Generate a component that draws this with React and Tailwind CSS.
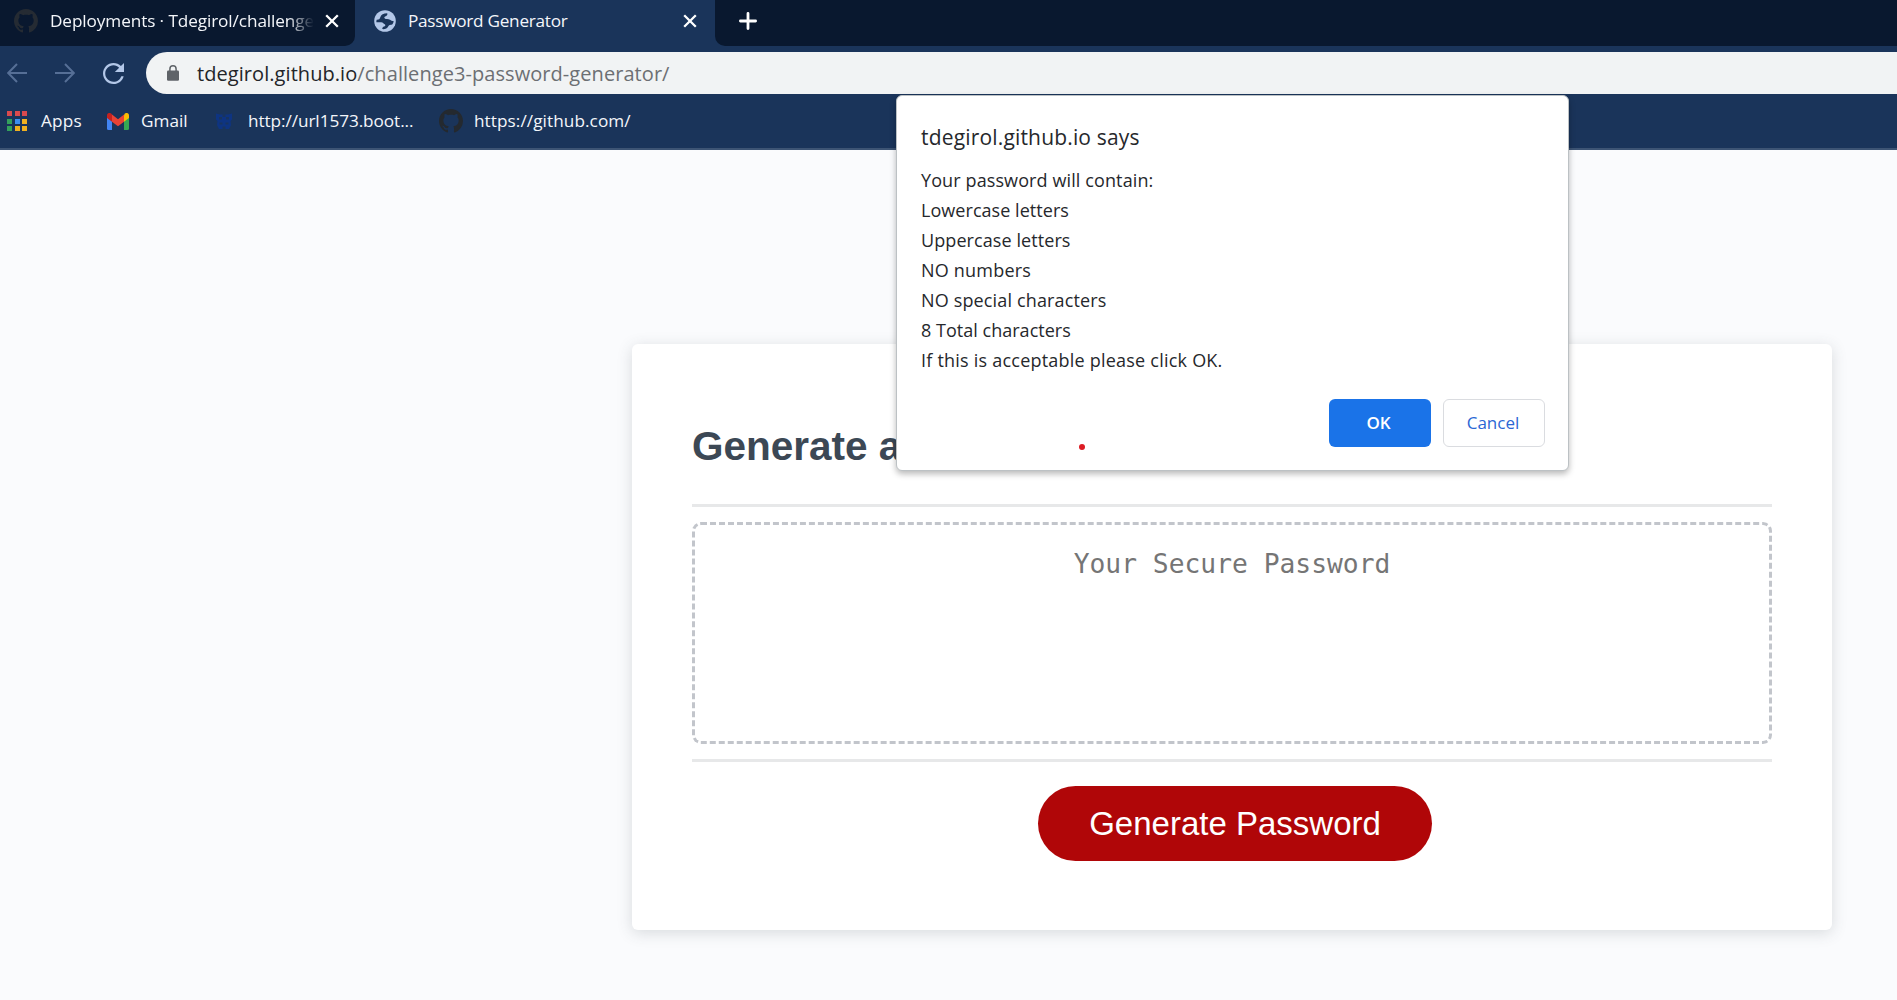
import React from "react";

const OCTOCAT =
  "M8 0C3.58 0 0 3.58 0 8c0 3.54 2.29 6.53 5.47 7.59.4.07.55-.17.55-.38 0-.19-.01-.82-.01-1.49-2.01.37-2.53-.49-2.69-.94-.09-.23-.48-.94-.82-1.13-.28-.15-.68-.52-.01-.53.63-.01 1.08.58 1.23.82.72 1.21 1.87.87 2.33.66.07-.52.28-.87.51-1.07-1.78-.2-3.64-.89-3.64-3.95 0-.87.31-1.59.82-2.15-.08-.2-.36-1.02.08-2.12 0 0 .67-.21 2.2.82.64-.18 1.32-.27 2-.27s1.36.09 2 .27c1.53-1.04 2.2-.82 2.2-.82.44 1.1.16 1.92.08 2.12.51.56.82 1.27.82 2.15 0 3.07-1.87 3.75-3.65 3.95.29.25.54.73.54 1.48 0 1.07-.01 1.93-.01 2.2 0 .21.15.46.55.38A8.01 8.01 0 0 0 16 8c0-4.42-3.58-8-8-8z";

const APP_COLORS = [
  "bg-[#d94a4e]", "bg-[#d94a4e]", "bg-[#d94a4e]",
  "bg-[#34a05c]", "bg-[#3c8ef0]", "bg-[#f0b020]",
  "bg-[#34a05c]", "bg-[#f0b020]", "bg-[#f0b020]",
];

const MESSAGE = [
  { text: "Your password will contain:", cls: "tracking-[0.11px]" },
  { text: "Lowercase letters", cls: "tracking-[0.05px]" },
  { text: "Uppercase letters", cls: "tracking-[0.08px]" },
  { text: "NO numbers", cls: "tracking-[0.2px]" },
  { text: "NO special characters", cls: "tracking-[0.15px]" },
  { text: "8 Total characters", cls: "tracking-[0.02px]" },
  { text: "If this is acceptable please click OK.", cls: "tracking-[0.22px]" },
];

function GitHubMark({ className }) {
  return (
    <svg viewBox="0 0 16 16" className={className} fill="currentColor">
      <path d={OCTOCAT} />
    </svg>
  );
}

function CloseIcon({ className = "" }) {
  return (
    <svg viewBox="0 0 14 14" className={`size-[14px] shrink-0 ${className}`} stroke="#fff" strokeWidth="2.3" fill="none">
      <path d="M1.2 1.2L12.8 12.8M12.8 1.2L1.2 12.8" />
    </svg>
  );
}

function TabStrip() {
  return (
    <div className="flex h-[46px] bg-[#1a345a] text-[17.2px] text-[#f4f6fa]">
      <div className="flex w-[355px] items-center rounded-br-[10px] bg-[#09182f] pb-[5px] pl-[14px]">
        <GitHubMark className="size-6 shrink-0 text-[#252b33]" />
        <div className="ml-[12px] w-[264px] overflow-hidden whitespace-nowrap tracking-[-0.1px] [mask-image:linear-gradient(to_right,#000_90%,transparent_100%)]">
          Deployments · Tdegirol/challenge
        </div>
        <CloseIcon className="ml-[11px]" />
      </div>
      <div className="flex w-[360px] items-center pb-[5px] pl-[19px]">
        <svg viewBox="0 0 22 22" className="size-[22px] shrink-0">
          <circle cx="11" cy="11" r="10.8" fill="#b3c7e8" />
          <path
            d="M6.300 7.200C7 4.700 9.500 3.500 13.200 3.300C13.800 4.700 13 5.700 11.600 6.200C10.400 6.700 10 7.300 10.600 8.200C11.500 9.500 14.500 8.600 16 9.700C17 10.500 18 11 19.600 11C19.500 13 18.600 14.800 17.200 14.700C15.600 14.600 14.600 15.400 14 16.700C13.200 18.500 11.300 19.300 8.300 19.100C8.100 17.500 8.800 16.800 10.200 16.400C11.600 16 11.700 15 10.700 14.300C9.300 13.400 9 12.300 7.200 12.200H2.400C2.300 11.200 2.400 10.400 2.700 9.700C4.800 9.800 5.900 9 6.300 7.200Z"
            fill="#1a345a"
          />
        </svg>
        <span className="ml-[12px] tracking-[-0.27px]">Password Generator</span>
        <CloseIcon className="ml-auto mr-[18px]" />
      </div>
      <div className="flex flex-1 items-center rounded-bl-[10px] bg-[#09182f] pb-[5px] pl-[24px]">
        <svg viewBox="0 0 18 18" className="size-[18px]" stroke="#fff" strokeWidth="2.8" strokeLinecap="round">
          <path d="M9 1.400V16.600M1.400 9H16.600" />
        </svg>
      </div>
    </div>
  );
}

function Toolbar() {
  return (
    <div className="flex h-12 items-center bg-[#1a345a] pt-[6px]">
      <svg viewBox="0 0 20 20" className="ml-[7px] size-5" stroke="#566f96" strokeWidth="2" fill="none">
        <path d="M20 10H1.800M10 1L1.200 10L10 19" />
      </svg>
      <svg viewBox="0 0 20 20" className="ml-7 size-5" stroke="#566f96" strokeWidth="2" fill="none">
        <path d="M0 10H18.200M10 1L18.800 10L10 19" />
      </svg>
      <svg viewBox="4 4 16 16" className="ml-7 size-[21px]" fill="#b3c7e8">
        <path d="M17.650 6.350C16.200 4.900 14.210 4 12 4c-4.420 0-7.990 3.580-7.990 8s3.570 8 7.990 8c3.730 0 6.840-2.550 7.730-6h-1.780c-.82 2.330-3.040 4.300-5.950 4.300-3.480 0-6.300-2.820-6.300-6.300s2.820-6.300 6.300-6.300c1.740 0 3.200.75 4.300 1.900L13 10.800h7V4l-2.350 2.350z" />
      </svg>
      <div className="ml-[22px] flex h-[42px] flex-1 items-center rounded-l-full bg-[#f1f3f4] pl-[21px]">
        <svg viewBox="0 0 12 16" className="h-4 w-3 shrink-0">
          <rect x="0" y="5.500" width="12" height="10.300" rx="1.200" fill="#5f6368" />
          <path d="M2.900 6V3.900a3.100 3.100 0 0 1 6.200 0V6" stroke="#5f6368" strokeWidth="1.500" fill="none" />
        </svg>
        <span className="ml-[18px] whitespace-nowrap pt-[2px] text-[20px] tracking-[0.065px] text-[#6c6f73]">
          <span className="text-[#232529]">tdegirol.github.io</span>/challenge3-password-generator/
        </span>
      </div>
    </div>
  );
}

function Bookmarks() {
  return (
    <div className="flex h-14 items-center border-b-2 border-[#3d5474] bg-[#1a345a] text-[17.2px] text-[#f4f6fa]">
      <div className="ml-[7px] grid grid-cols-3 gap-[2.500px]">
        {APP_COLORS.map((c, i) => (
          <span key={i} className={`size-[5px] ${c}`} />
        ))}
      </div>
      <span className="ml-[14px] w-[41px] tracking-[0.2px]">Apps</span>
      <svg viewBox="0 0 22 17" className="ml-[25px] h-[17px] w-[22px] shrink-0">
        <path d="M0 2.500V15.500A1.500 1.500 0 0 0 1.500 17H5V7z" fill="#4285f4" />
        <path d="M22 2.500V15.500A1.500 1.500 0 0 1 20.500 17H17V7z" fill="#34a853" />
        <path d="M17 2.200V8.800L22 5V2.500C22 .2 19.500-.8 17.800.6z" fill="#fbbc04" />
        <path d="M5 8.800V1.600L11 6.200L17 1.600V8.800L11 13.300z" fill="#ea4335" />
        <path d="M0 2.500V5L5 8.800V1.400L4.200.6C2.500-.8 0 .2 0 2.500z" fill="#c5221f" />
      </svg>
      <span className="ml-[12px] w-[48px]">Gmail</span>
      <svg viewBox="0 0 16 18" className="ml-[27px] h-[18px] w-4 shrink-0" fill="#0e3482">
        <path d="M0 1.500L4 2.500H12L16 1.500V7.500L14.500 9L15 13L13 17H3L1 13L1.500 9L0 7.500z" />
        <path d="M3 5H6V7.500H3zM10 5H13V7.500H10zM6.500 0H9.500V5H6.500zM3.500 10.500H6.500V12.500H3.500zM9.500 10.500H12.500V12.500H9.500zM6.500 14.500H9.500V17H6.500z" fill="#18345f" />
      </svg>
      <span className="ml-[16px] w-[166px] tracking-[-0.07px]">http://url1573.boot...</span>
      <GitHubMark className="ml-[25px] size-6 shrink-0 text-[#24292f]" />
      <span className="ml-[11px] tracking-[0.07px]">https://github.com/</span>
    </div>
  );
}

function GeneratorCard() {
  return (
    <section className="ml-[632px] flex h-[586px] w-[1200px] flex-col rounded-md bg-white px-[60px] shadow-[0_3px_15px_rgba(60,70,80,0.18)]">
      <header className="flex h-[160px] items-center pt-[43px] font-['Liberation_Sans',sans-serif]">
        <h2 className="whitespace-nowrap text-[40.5px] font-bold leading-[46px] text-[#3c4855]">Generate a Password</h2>
      </header>
      <div className="h-[3px] bg-[#e7e8e9]" />
      <textarea
        readOnly
        placeholder="Your Secure Password"
        className="mt-[15px] block h-[222px] w-full resize-none rounded-[9px] border-[3px] border-dashed border-[#c2c5cb] pt-[22px] text-center font-['DejaVu_Sans_Mono',monospace] text-[26.3px] leading-[34px] placeholder:text-[#757575]"
      />
      <div className="mt-[15px] h-[3px] shrink-0 bg-[#e7e8e9]" />
      <button className="ml-[346px] mt-6 h-[75px] w-[394px] rounded-full bg-[#b00608] font-['Liberation_Sans',sans-serif] text-[33px] text-white">
        Generate Password
      </button>
    </section>
  );
}

function ConfirmDialog() {
  return (
    <div className="absolute left-[896px] top-[95px] h-[376px] w-[673px] rounded-md border border-[#bcc1c4] bg-white px-6 pt-[26px] text-[#26282c] shadow-[0_3px_6px_rgba(0,0,0,0.28)]">
      <h1 className="text-[21px] leading-[30px] tracking-[0.17px]">tdegirol.github.io says</h1>
      <div className="mt-[13px] text-[18px] leading-[30px]">
        {MESSAGE.map((m) => (
          <p key={m.text} className={m.cls}>{m.text}</p>
        ))}
      </div>
      <div className="mt-6 flex justify-end gap-3 -mr-[1px] text-[17px]">
        <button className="h-12 w-[102px] rounded-md bg-[#1a73e8] pr-[3px] font-semibold text-white">OK</button>
        <button className="h-12 w-[102px] rounded-md border border-[#dadce0] pr-[2px] font-medium text-[#2b66d4]">Cancel</button>
      </div>
      <span className="absolute left-[182px] top-[348px] size-[6px] rounded-full bg-[#dc1c24]" />
    </div>
  );
}

export default function App() {
  return (
    <div className="relative h-[1000px] w-full overflow-hidden bg-[#fafbfd] font-['Open_Sans',sans-serif]">
      <TabStrip />
      <Toolbar />
      <Bookmarks />
      <main className="pt-[194px]">
        <GeneratorCard />
      </main>
      <ConfirmDialog />
    </div>
  );
}
